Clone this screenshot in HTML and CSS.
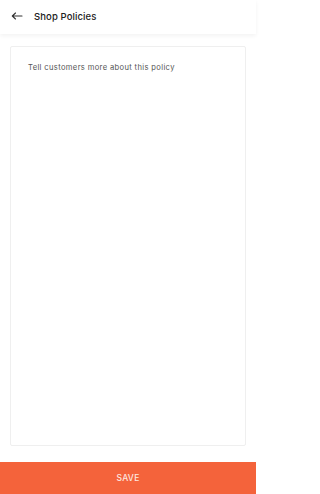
FILE: index.html
```html
<!DOCTYPE html>
<html>
<head>
<meta charset="utf-8">
<link rel="stylesheet" href="styles.css">
</head>
<body>
<div class="app">
  <header class="topbar">
    <svg class="back" width="12" height="8" viewBox="0 0 12 8"><path d="M11 4H1.5M4.5 1L1.3 4l3.2 3" fill="none" stroke="#333" stroke-width="1.1" stroke-linecap="round" stroke-linejoin="round"/></svg>
    <span class="title">Shop Policies</span>
  </header>
  <main class="content">
    <div class="card">
      <p class="placeholder">Tell customers more about this policy</p>
    </div>
  </main>
  <button class="save">SAVE</button>
</div>
</body>
</html>
```
FILE: styles.css
```css
html, body {
  margin: 0;
  padding: 0;
  background: #fff;
}
body {
  font-family: "Inter", "Roboto", "Liberation Sans", sans-serif;
}
.app {
  width: 100%;
  max-width: 256px;
  height: 494px;
  display: flex;
  flex-direction: column;
}
.topbar {
  height: 34px;
  flex: none;
  display: flex;
  align-items: center;
  padding-left: 11px;
  gap: 11px;
  box-shadow: 0 2px 4px rgba(0,0,0,0.05);
  background: #fff;
}
.back {
  display: block;
  margin-top: -2px;
}
.title {
  font-size: 9.5px;
  font-weight: 500;
  color: #222;
  letter-spacing: 0.1px;
  margin-top: -1px;
}
.content {
  flex: 1;
  padding: 12px 10px 16px 10px;
  display: flex;
}
.card {
  flex: 1;
  border: 1px solid #efefef;
  border-radius: 2px;
  padding: 16px 17px;
}
.placeholder {
  margin: 0;
  font-size: 7.6px;
  letter-spacing: 0.35px;
  color: #555;
}
.save {
  height: 32px;
  flex: none;
  border: none;
  background: #f4633b;
  color: #fde8e0;
  font-family: inherit;
  font-size: 8.5px;
  font-weight: 500;
  letter-spacing: 0.3px;
  padding: 0;
}
```
